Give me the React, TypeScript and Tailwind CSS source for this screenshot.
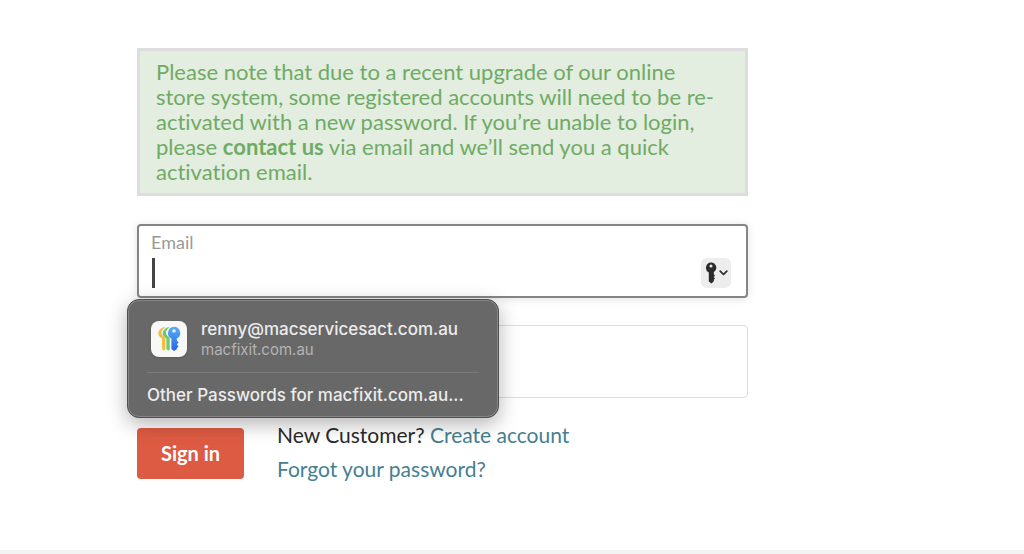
import React, { useState } from 'react';

interface SavedLogin {
  username: string;
  site: string;
}

const savedLogin: SavedLogin = {
  username: 'renny@macservicesact.com.au',
  site: 'macfixit.com.au'
};

const KeyIcon: React.FC = () => (
  <svg width="12" height="22" viewBox="0 0 12 22" aria-hidden="true">
    <path
      fill="#2b2b2b"
      fillRule="evenodd"
      d="M6 .5a5.300 5.300 0 0 1 2.800 9.800v2l1.200 1.200-1.300 1.400 1.300 1.400-1.200 1.500v1.500L6.500 21.500 3.800 19.500v-9A5.300 5.300 0 0 1 6 .5Zm0 2a1.500 1.500 0 1 0 0 3 1.500 1.500 0 0 0 0-3Z"
    />
  </svg>
);

const ChevronIcon: React.FC = () => (
  <svg width="9" height="6" viewBox="0 0 9 6" fill="none" aria-hidden="true">
    <path d="m1.200 1.200 3.300 3.300 3.300-3.300" stroke="#2b2b2b" strokeWidth="1.700" strokeLinecap="round" strokeLinejoin="round" />
  </svg>
);

const PasswordsIcon: React.FC = () => (
  <svg width="24" height="26" viewBox="0 0 24 26" aria-hidden="true">
    <defs>
      <linearGradient id="blueKey" x1="0" y1="0" x2="0" y2="1">
        <stop offset="0" stopColor="#5aaef5" />
        <stop offset="1" stopColor="#2563eb" />
      </linearGradient>
    </defs>
    {/* Yellow and green keys fanned out behind the blue one */}
    <path d="M6.500 1.200C3.500 2.500 1.300 4.500 1.300 7.200c0 2.400 1.700 3.800 3.700 5.300v10.500l2 1.700 1.300-1.500V12C6 10 4.500 8.500 4.500 6.500c0-2 1.500-3.700 3.800-5Z" fill="#f2bd45" />
    <path d="M10.800 1.200C7.800 2.500 5.700 4.500 5.700 7.200c0 2.400 1.700 3.800 3.700 5.300v10.500l2 1.700 1.300-1.500V12C10.400 10 9 8.500 9 6.500c0-2 1.500-3.700 3.700-5Z" fill="#6fca6b" />
    <path
      d="M17 .8a6.200 6.200 0 0 1 2.800 11.700v2l1.900 1.900-1.900 2 1.700 2-1.700 1.800v1L17 25l-2.600-2V12.500A6.200 6.200 0 0 1 17 .8Zm0 2.400a1.700 1.700 0 1 0 0 3.400 1.700 1.700 0 0 0 0-3.400Z"
      fill="url(#blueKey)"
      fillRule="evenodd"
    />
  </svg>
);

const Notice: React.FC = () => (
  <div className="border-[3px] border-[#dcdddc] bg-[#e3ede0] pb-[9px] pl-4 pt-2 text-[22px] leading-[25px] text-[#6fab65]">
    Please note that due to a recent upgrade of our online
    <br />
    store system, some registered accounts will need to be re-
    <br />
    activated with a new password. If you’re unable to login,
    <br />
    please <a href="#contact" className="font-bold">contact us</a> via email and we’ll send you a quick
    <br />
    activation email.
  </div>
);

const PasswordMenu: React.FC<{ login: SavedLogin }> = ({ login }) => (
  <div className="absolute -left-2.5 top-[75px] z-10 w-[372px] rounded-xl border border-[#505050] bg-[#686868] px-[19px] pb-2.5 pt-[18px] font-['Inter','Liberation_Sans',sans-serif] shadow-[inset_0_0_0_1px_#858585,0_6px_20px_rgba(0,0,0,0.3)]">
    <button type="button" className="flex w-full items-center gap-3.5 pl-1 text-left">
      <span className="flex size-9 shrink-0 items-center justify-center rounded-lg bg-[#f8f8f6] shadow">
        <PasswordsIcon />
      </span>
      <span className="flex flex-col">
        <span className="text-[17px] font-medium leading-[22px] text-[#ececec]">{login.username}</span>
        <span className="text-[15px] leading-5 text-[#b4b4b4]">{login.site}</span>
      </span>
    </button>
    <hr className="mb-2.5 mt-3 border-[#7a7a7a]" />
    <button type="button" className="block w-full whitespace-nowrap text-left text-[17px] font-medium leading-6 text-[#ececec]">
      Other Passwords for {login.site}...
    </button>
  </div>
);

const App: React.FC = () => {
  const [email, setEmail] = useState('');
  const [password, setPassword] = useState('');

  return (
    <div className="bg-white font-['Lato','Liberation_Sans',sans-serif] text-[#2b2b2b] [font-variant-ligatures:none]">
      <main className="pb-16 pl-[137px] pr-[276px] pt-12">
        <Notice />

        <form className="mt-7" onSubmit={(e) => e.preventDefault()}>
          <div className="relative">
            <div className="flex h-[74px] items-end justify-between rounded border-2 border-[#858585] px-3 pb-2 shadow-[0_1px_8px_rgba(0,0,0,0.12)]">
              <div className="flex flex-1 flex-col">
                <label htmlFor="email" className="text-[18px] leading-5 text-[#999999]">Email</label>
                <div className="mt-1.5 flex items-center px-px">
                  {email === '' && <span className="h-[30px] w-[3px] bg-[#444444]" />}
                  <input
                    id="email"
                    type="email"
                    className="h-[30px] flex-1 text-[21px] outline-none"
                    value={email}
                    onChange={(e) => setEmail(e.target.value)}
                  />
                </div>
              </div>
              <button type="button" aria-label="Saved passwords" className="mr-[3px] flex h-[30px] w-[30px] items-center justify-center gap-0.5 rounded-md bg-[#ededed]">
                <KeyIcon />
                <ChevronIcon />
              </button>
            </div>
            <PasswordMenu login={savedLogin} />
          </div>

          <div className="mt-[27px] flex h-[73px] items-end rounded border border-[#dddddd] px-3 pb-2">
            <input
              id="password"
              type="password"
              aria-label="Password"
              className="h-[30px] flex-1 text-[21px] outline-none"
              value={password}
              onChange={(e) => setPassword(e.target.value)}
            />
          </div>

          <div className="mt-[30px] flex gap-[33px]">
            <button type="submit" className="h-[51px] w-[107px] rounded-sm bg-[#de5b43] pb-0.5 text-[20px] font-bold text-white">
              Sign in
            </button>
            <div className="-mt-2.5 text-[21px] leading-[34px]">
              <p>
                New Customer? <a href="#register" className="text-[#457f91]">Create account</a>
              </p>
              <a href="#recover" className="text-[#457f91]">Forgot your password?</a>
            </div>
          </div>
        </form>
      </main>
      <footer className="h-1 bg-[#f3f3f3]" />
    </div>
  );
};

export default App;
